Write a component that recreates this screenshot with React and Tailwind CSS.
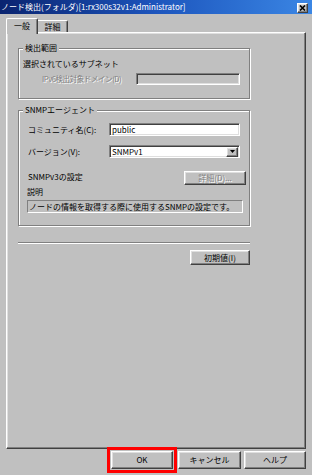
const raised =
  'border border-t-white border-l-white border-r-[#404040] border-b-[#404040] shadow-[inset_-1px_-1px_0_#808080,inset_1px_1px_0_#dfdfdf] bg-[#c0c0c0]';
const sunken =
  'border border-t-[#808080] border-l-[#808080] border-r-white border-b-white shadow-[inset_1px_1px_0_#404040,inset_-1px_-1px_0_#dfdfdf]';
const etched = 'border border-[#808080] shadow-[1px_1px_0_#fff,inset_1px_1px_0_#fff]';
const disabledText = 'text-[#808080] [text-shadow:1px_1px_0_#fff]';

function GroupBox({ label, className, children }) {
  return (
    <div className={`relative w-[232px] ${etched} ${className}`}>
      <span className="absolute left-[4px] -top-[7px] bg-[#c0c0c0] px-[2px] leading-[12px]">{label}</span>
      {children}
    </div>
  );
}

function Button({ children, className = '', disabled }) {
  return (
    <div className={`flex items-center justify-center ${raised} ${disabled ? disabledText : ''} ${className}`}>
      {children}
    </div>
  );
}

export default function App() {
  return (
    <div className="w-[312px] h-[475px] bg-[#c0c0c0] overflow-hidden text-[8px] text-black font-['Noto_Sans_CJK_JP','Noto_Sans_CJK_SC',sans-serif] leading-[12px]">
      {/* title bar */}
      <div className="h-[14px] flex items-center justify-between bg-linear-to-r from-[#0a2470] via-[#1d55bd] to-[#3b86e4] pl-[1px] pr-[4px]">
        <span className="text-white leading-[12px]">ノード検出(フォルダ)[1:rx300s32v1:Administrator]</span>
        <div className={`w-[11px] h-[10px] flex items-center justify-center ${raised} mt-[1px]`}>
          <svg width="7" height="6" viewBox="0 0 7 6">
            <path d="M1 0.5 L6 5.5 M6 0.5 L1 5.5" stroke="#000" strokeWidth="1.6" />
          </svg>
        </div>
      </div>

      <div className="pl-[6px]">
        {/* tabs */}
        <div className="flex items-end h-[18px]">
          <div className="relative z-10 w-[32px] h-[16px] -mb-[2px] bg-[#c0c0c0] border-t border-l border-t-white border-l-white border-r border-r-[#404040] rounded-t-[2px] shadow-[inset_-1px_0_0_#808080] flex items-start justify-center pt-[1px]">
            一般
          </div>
          <div className="w-[30px] h-[12px] bg-[#c0c0c0] border-t border-t-white border-r border-r-[#404040] rounded-tr-[2px] shadow-[inset_-1px_0_0_#808080] flex items-center justify-center">
            詳細
          </div>
        </div>

        {/* tab panel */}
        <div className={`w-[300px] h-[417px] pl-[11px] ${raised}`}>
          <GroupBox label="検出範囲" className="mt-[15px] h-[51px]">
            <div className="pl-[4px] pt-[9px]">
              <div className="leading-[12px]">選択されているサブネット</div>
              <div className="flex items-center mt-[3px] pl-[19px] h-[12px]">
                <span className={`w-[94px] whitespace-nowrap text-[7.5px] tracking-[-0.4px] ${disabledText}`}>IPv6検出対象ドメイン(D)</span>
                <div className={`w-[104px] h-[12px] ${sunken}`} />
              </div>
            </div>
          </GroupBox>

          <GroupBox label="SNMPエージェント" className="mt-[11px] h-[116px]">
            <div className="pt-[12px]">
              <div className="flex items-center h-[13px] pl-[9px]">
                <span className="w-[81px]">コミュニティ名(C):</span>
                <div className={`w-[131px] h-[13px] bg-white flex items-center pl-[2px] ${sunken}`}>public</div>
              </div>
              <div className="flex items-center h-[13px] mt-[9px] pl-[9px]">
                <span className="w-[81px]">バージョン(V):</span>
                <div className={`w-[131px] h-[13px] bg-white flex items-center justify-between pl-[2px] pr-[1px] ${sunken}`}>
                  <span>SNMPv1</span>
                  <div className={`w-[12px] h-[10px] flex items-center justify-center ${raised}`}>
                    <svg width="5" height="3" viewBox="0 0 5 3">
                      <path d="M0 0 H5 L2.5 3 Z" fill="#000" />
                    </svg>
                  </div>
                </div>
              </div>
              <div className="flex items-center h-[14px] mt-[13px] pl-[9px]">
                <span className="w-[156px] -mt-[3px]">SNMPv3の設定</span>
                <Button disabled className="w-[62px] h-[14px]">詳細(D)...</Button>
              </div>
              <div className="mt-[2px] pl-[8px] leading-[10px]">説明</div>
              <div className="ml-[8px] mt-[3px] w-[216px] h-[13px] flex items-center pl-[1px] whitespace-nowrap border border-t-[#808080] border-l-[#808080] border-r-white border-b-white">
                ノードの情報を取得する際に使用するSNMPの設定です。
              </div>
            </div>
          </GroupBox>

          <div className="w-[232px] mt-[16px] h-[2px] border-t border-t-[#808080] border-b border-b-white" />

          <div className="w-[232px] flex justify-end mt-[6px]">
            <Button className="w-[60px] h-[15px]">初期値(I)</Button>
          </div>
        </div>

        {/* bottom buttons */}
        <div className="w-[300px] flex justify-end mt-[2px]">
          <div className="relative">
            <Button className="w-[62px] h-[18px]">OK</Button>
            <div className="absolute -left-[4px] -top-[4px] w-[70px] h-[26px] border-[3px] border-[#ff0000]" />
          </div>
          <Button className="w-[63px] h-[18px] ml-[5px]">キャンセル</Button>
          <Button className="w-[62px] h-[18px] ml-[3px]">ヘルプ</Button>
        </div>
      </div>
    </div>
  );
}
